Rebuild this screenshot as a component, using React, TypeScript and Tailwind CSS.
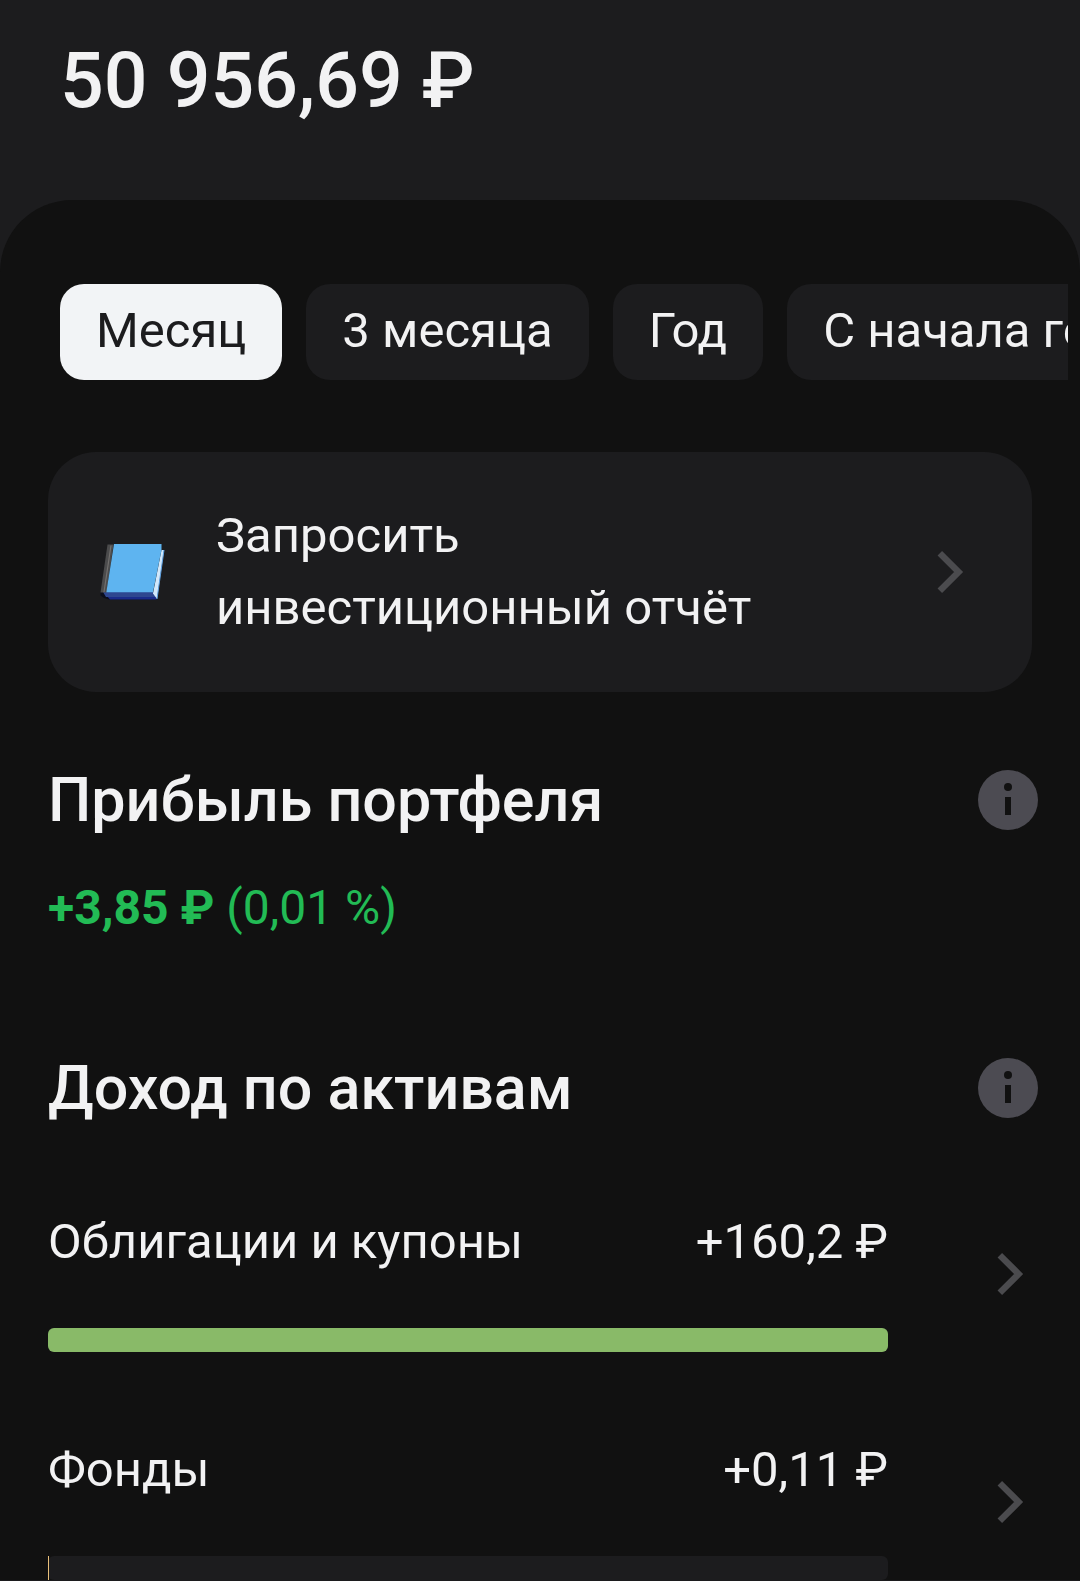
const periods = ["Месяц", "3 месяца", "Год", "С начала года"];

const assets = [
  { name: "Облигации и купоны", amount: "+160,2 ₽", percent: 100, fill: "rounded-md bg-[#89ba68]" },
  { name: "Фонды", amount: "+0,11 ₽", percent: 0.12, fill: "bg-[#e9c07a]" },
];

function Chevron() {
  return (
    <svg viewBox="0 0 72 72" className="size-18 shrink-0" aria-hidden="true">
      <path d="M27.8 17.2 46.6 36 27.8 54.8" fill="none" stroke="#4b4b4e" strokeWidth="6.4" />
    </svg>
  );
}

function InfoButton({ label }: { label: string }) {
  return (
    <button aria-label={label} className="shrink-0">
      <svg viewBox="0 0 72 72" className="size-18" aria-hidden="true">
        <circle cx="36" cy="36" r="30" fill="#4c4b52" />
        <circle cx="36" cy="23" r="4" fill="#111111" />
        <rect x="33" y="33" width="6" height="18" fill="#111111" />
      </svg>
    </button>
  );
}

function Book() {
  return (
    <svg viewBox="0 0 72 72" className="size-18 shrink-0" aria-hidden="true">
      <path d="M4.500 56v3.500L8 62l5 1.500h48v-4L9 55z" fill="#0a0d1c" />
      <path d="M11 60h49.500v3.500H14z" fill="#1a2b8a" />
      <path d="M7 56h51l2 5H10z" fill="#2e4790" />
      <path d="M11.500 8.500h6L10.500 56.500H4.500z" fill="#4b4b4c" />
      <path d="M15 9.500 8 56" stroke="#72706e" strokeWidth="1.2" />
      <path d="M65.500 14h2.500L61 63 57 57.500z" fill="#d2e8fb" />
      <path d="M68 14 61 63" stroke="#5c9fe0" strokeWidth="1" />
      <path d="M18 8h47.500v6L57 56.300H10.300z" fill="#5eb4f0" />
    </svg>
  );
}

export default function App() {
  return (
    <main className="min-h-screen bg-[#1c1c1e] font-[Roboto,sans-serif] text-[49px] leading-[72px] text-[#f2f2f3]">
      <header className="px-15 pt-8 pb-[70px]">
        <h1 className="text-[77px] leading-[98px] font-medium">50 956,69 ₽</h1>
      </header>

      <div className="rounded-t-[72px] bg-[#111111] pt-21">
        <div className="mr-3 flex gap-6 overflow-hidden pl-15">
          {periods.map((period, i) => (
            <button
              key={period}
              aria-pressed={i === 0}
              className={`h-24 shrink-0 rounded-3xl px-9 pb-0.5 whitespace-nowrap ${
                i === 0 ? "bg-[#f2f4f6] text-[#1c1c1e]" : "bg-[#1c1c1e]"
              }`}
            >
              {period}
            </button>
          ))}
        </div>

        <div className="mt-18 px-12">
          <button className="flex w-full items-center rounded-[48px] bg-[#1c1c1e] p-12 text-left">
            <Book />
            <span className="ml-12 flex-1 pr-24">Запросить инвестиционный отчёт</span>
            <Chevron />
          </button>
        </div>

        <section className="mt-18 pr-9 pl-12">
          <div className="flex items-center justify-between">
            <h2 className="text-[61px] leading-[72px] font-medium">Прибыль портфеля</h2>
            <InfoButton label="О прибыли портфеля" />
          </div>
          <p className="mt-9 text-5xl leading-[72px] text-[#22bb55]">
            <b className="font-bold">+3,85 ₽</b> (0,01 %)
          </p>
        </section>

        <section className="mt-27 pr-9 pl-12">
          <div className="flex items-center justify-between">
            <h2 className="text-[61px] leading-[72px] font-medium">Доход по активам</h2>
            <InfoButton label="О доходе по активам" />
          </div>

          <ul className="mt-18 flex flex-col gap-18">
            {assets.map((asset) => (
              <li key={asset.name}>
                <a href="#" className="flex items-center gap-21">
                  <div className="flex-1 pt-[10px]">
                    <div className="flex justify-between">
                      <span>{asset.name}</span>
                      <span>{asset.amount}</span>
                    </div>
                    <div className="mt-[50px] h-6 rounded-md bg-[#1c1c1e]">
                      <div className={`h-full ${asset.fill}`} style={{ width: `${asset.percent}%` }} />
                    </div>
                  </div>
                  <Chevron />
                </a>
              </li>
            ))}
          </ul>
        </section>
      </div>
    </main>
  );
}
